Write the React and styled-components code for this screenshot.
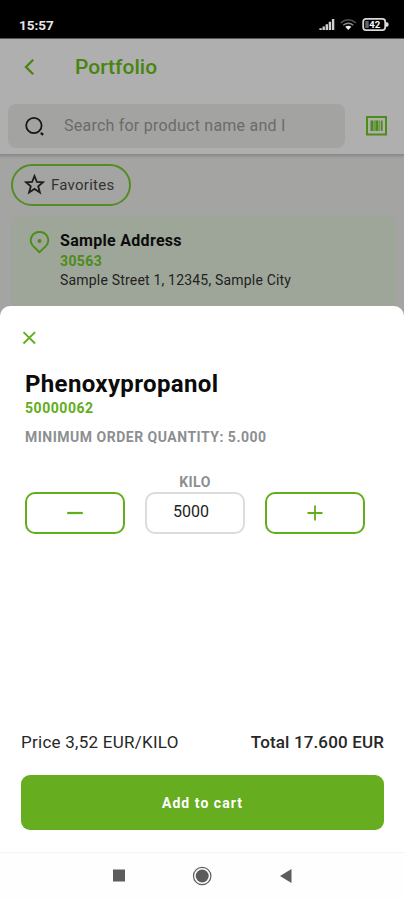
import React, { useState } from 'react';
import styled, { createGlobalStyle } from 'styled-components';

const GlobalStyle = createGlobalStyle`
  :root {
    --green: #62ad1c;
    --green-dim: #488510;
    --text: #272727;
    --gray: #8c8f92;
  }
  * {
    box-sizing: border-box;
  }
  body {
    margin: 0;
    background: #fff;
    font-family: Roboto, sans-serif;
  }
  button, input {
    font-family: inherit;
    margin: 0;
    padding: 0;
  }
  svg {
    display: block;
    flex-shrink: 0;
  }
`;

const Screen = styled.div`
  width: 404px;
  height: 900px;
  display: flex;
  flex-direction: column;
  overflow: hidden;
`;

const StatusBar = styled.div`
  height: 39px;
  flex-shrink: 0;
  display: flex;
  align-items: center;
  justify-content: space-between;
  padding: 11px 15px 0 19px;
  background: #000;
  border-bottom: 1px solid #555;
  color: #e6e6e6;
  font-size: 13.5px;
  font-weight: 700;
  line-height: 16px;
`;

const Page = styled.div`
  height: 279px;
  flex-shrink: 0;
  background: #a4a4a3;
  overflow: hidden;
`;

const Header = styled.header`
  height: 115px;
  background: #afafaf;
  box-shadow: 0 1px 3px 1px #858585;
`;

const TitleRow = styled.div`
  display: flex;
  align-items: center;
  height: 57px;
  padding: 0 0 1px 22px;
  gap: 37px;
`;

const Title = styled.h1`
  margin: 0;
  font-size: 21px;
  font-weight: 500;
  line-height: 26px;
  color: var(--green-dim);
`;

const SearchRow = styled.div`
  display: flex;
  align-items: center;
  padding: 8px 17px 0 8px;
  justify-content: space-between;
`;

const SearchBox = styled.div`
  display: flex;
  align-items: center;
  gap: 19px;
  width: 337px;
  height: 44px;
  padding-left: 16px;
  border-radius: 8px;
  background: #a3a4a1;
  color: #6b6b6b;
  font-size: 16px;
  line-height: 20px;
  letter-spacing: 0.23px;
`;

const Content = styled.div`
  padding: 10px 8px 0 11px;
`;

const Chip = styled.div`
  display: flex;
  align-items: center;
  gap: 6px;
  width: 120px;
  height: 42px;
  padding: 0 0 1px 11px;
  border: 2px solid #538d24;
  border-radius: 21px;
  color: #333;
  font-size: 15px;
  letter-spacing: 0.25px;
`;

const AddressCard = styled.div`
  display: flex;
  gap: 10px;
  height: 110px;
  margin-top: 10px;
  padding: 14px 0 0 18px;
  border-radius: 8px;
  background: #9ea699;
`;

const AddressText = styled.div`
  font-size: 14px;
  line-height: 20px;
  letter-spacing: 0.19px;
  color: #222;
`;

const AddressName = styled.div`
  font-size: 16px;
  font-weight: 700;
  line-height: 22px;
  letter-spacing: 0.3px;
  color: #0c0c0c;
`;

const AddressCode = styled.div`
  font-size: 14px;
  font-weight: 700;
  line-height: 18px;
  letter-spacing: 0.4px;
  color: #4d8b17;
`;

const Sheet = styled.section`
  position: relative;
  flex: 1;
  display: flex;
  flex-direction: column;
  margin-top: -12px;
  padding: 24px 20px 22px 21px;
  border-radius: 10px 10px 0 0;
  background: #fff;
`;

const CloseButton = styled.button`
  width: 16px;
  height: 16px;
  border: none;
  background: none;
`;

const Product = styled.div`
  padding: 23px 4px 0;
`;

const ProductName = styled.h2`
  margin: 0;
  font-size: 24px;
  font-weight: 700;
  line-height: 30px;
  letter-spacing: 0.35px;
  color: #0b0b0b;
`;

const ProductCode = styled.div`
  font-size: 14px;
  font-weight: 700;
  line-height: 18px;
  letter-spacing: 0.55px;
  color: var(--green);
`;

const Label = styled.div`
  font-size: 14px;
  font-weight: 700;
  line-height: 18px;
  letter-spacing: ${({ $wide }) => ($wide ? '0.5px' : '0.4px')};
  color: var(--gray);
`;

const MinimumOrder = styled(Label)`
  margin-top: 11px;
`;

const Stepper = styled.div`
  display: grid;
  grid-template-columns: repeat(3, 100px);
  column-gap: 20px;
  align-items: end;
  margin-top: 27px;
`;

const StepButton = styled.button`
  display: flex;
  align-items: center;
  justify-content: center;
  height: 42px;
  border: 2px solid var(--green);
  border-radius: 10px;
  background: #fff;
`;

const Quantity = styled.label`
  display: flex;
  flex-direction: column;
  align-items: center;
`;

const QuantityInput = styled.input`
  width: 100%;
  height: 42px;
  margin-top: 1px;
  padding: 0 8px 3px 0;
  border: 2px solid #dcdcdc;
  border-radius: 10px;
  outline: none;
  background: #fff;
  color: #222;
  font-size: 16px;
  text-align: center;
`;

const PriceRow = styled.div`
  display: flex;
  justify-content: space-between;
  margin-top: auto;
  font-size: 17px;
  line-height: 22px;
  letter-spacing: 0.26px;
  color: var(--text);
`;

const Total = styled.span`
  font-weight: 500;
  letter-spacing: 0.14px;
`;

const CartButton = styled.button`
  height: 55px;
  margin-top: 22px;
  border: none;
  border-radius: 9px;
  background: #66ad1f;
  color: #fff;
  font-size: 14px;
  font-weight: 700;
  letter-spacing: 1.05px;
`;

const NavBar = styled.nav`
  display: grid;
  grid-template-columns: repeat(3, 84px);
  justify-content: center;
  justify-items: center;
  align-items: center;
  height: 48px;
  flex-shrink: 0;
  padding-bottom: 2px;
  border-top: 1px solid #f4f4f4;
  background: #fefefe;
`;

const StatusIcons = () => (
  <svg width="70" height="16" viewBox="0 0 70 16" fill="none">
    <path
      d="M1.6 13v-1.8M4.7 13v-3.5M7.8 13V7.2M10.9 13V4.8M14.1 13V2"
      stroke="#d0d0d0"
      strokeWidth="2.4"
    />
    <path d="M21.8 5.8q7.5-6 15 0" stroke="#505050" strokeWidth="1.5" />
    <path d="M24.2 8.2q5.1-4 10.2 0" stroke="#8a8a8a" strokeWidth="1.4" />
    <path d="M26.2 9.7q3.1-2 6.2 0l-3.1 3.3z" fill="#eee" />
    <rect x="44.2" y="1.9" width="22" height="11.2" rx="2.8" stroke="#d8d8d8" strokeWidth="1.8" />
    <path d="M67 5.3h1q1.6 0 1.6 2.2T68 9.7h-1z" fill="#ddd" />
    <path d="M46.3 4h3.4v7h-3.4z" fill="#666" />
    <text x="50.2" y="11" fill="#fff" fontSize="9.5" fontWeight="700">
      42
    </text>
  </svg>
);

const BackIcon = () => (
  <svg width="16" height="18" viewBox="0 0 16 18" fill="none">
    <path d="M11.2 1.7L4 9l7.2 7.3" stroke="#488510" strokeWidth="2.3" />
  </svg>
);

const SearchIcon = () => (
  <svg width="21" height="21" viewBox="0 0 21 21" fill="none" stroke="#171717">
    <circle cx="9.9" cy="9.5" r="7.7" strokeWidth="1.8" />
    <path d="M16.8 16.8l2.4 2" strokeWidth="2.2" />
  </svg>
);

const BarcodeIcon = () => (
  <svg width="21" height="20" viewBox="0 0 21 20" fill="none" stroke="#4d8d17">
    <rect x="1" y="1" width="19" height="17.5" strokeWidth="2" />
    <path d="M6 4.5v10.5M10.9 4.5v10.5" strokeWidth="3" />
    <path d="M8.6 4.5v10.5M13.4 4.5v10.5" stroke="#6f9a4c" strokeWidth="1.2" />
    <path d="M15.7 4.5v10.5" strokeWidth="1.9" />
  </svg>
);

const StarIcon = () => (
  <svg width="21" height="21" viewBox="0 0 21 21" fill="none">
    <path
      d="M10.5 2l2.4 6 6.1.3-4.8 4 1.7 6.1-5.4-3.5-5.4 3.5 1.7-6.1L2 8.3l6.1-.3z"
      stroke="#1d1d1d"
      strokeWidth="1.8"
    />
  </svg>
);

const PinIcon = () => (
  <svg width="21" height="24" viewBox="0 0 21 24" fill="none">
    <path
      d="M10.5 22.3L4.2 16.2C-.8 11 2.4 2 10.5 2s11.3 9 6.3 14.2z"
      stroke="#4d8d17"
      strokeWidth="1.9"
    />
    <circle cx="10.5" cy="11" r="2" fill="#4d8d17" />
  </svg>
);

const CloseIcon = () => (
  <svg width="16" height="16" viewBox="0 0 16 16" fill="none">
    <path d="M2.5 2.1l11.6 11.4M14.1 2.1L2.5 13.5" stroke="#62ad1c" strokeWidth="1.9" />
  </svg>
);

const StepIcon = ({ plus }) => (
  <svg width="16" height="16" viewBox="0 0 16 16" fill="none">
    <path
      d={plus ? 'M.5 8h15M8 .5v15' : 'M.2 8h15.6'}
      stroke="#62ad1c"
      strokeWidth={plus ? 1.8 : 2.2}
    />
  </svg>
);

export default function App() {
  const [quantity, setQuantity] = useState(5000);
  const step = 5000;

  return (
    <>
      <GlobalStyle />
      <Screen>
        <StatusBar>
          <span>15:57</span>
          <StatusIcons />
        </StatusBar>
        <Page>
          <Header>
            <TitleRow>
              <BackIcon />
              <Title>Portfolio</Title>
            </TitleRow>
            <SearchRow>
              <SearchBox>
                <SearchIcon />
                <span>Search for product name and I</span>
              </SearchBox>
              <BarcodeIcon />
            </SearchRow>
          </Header>
          <Content>
            <Chip>
              <StarIcon />
              Favorites
            </Chip>
            <AddressCard>
              <PinIcon />
              <AddressText>
                <AddressName>Sample Address</AddressName>
                <AddressCode>30563</AddressCode>
                Sample Street 1, 12345, Sample City
              </AddressText>
            </AddressCard>
          </Content>
        </Page>
        <Sheet>
          <CloseButton aria-label="Close">
            <CloseIcon />
          </CloseButton>
          <Product>
            <ProductName>Phenoxypropanol</ProductName>
            <ProductCode>50000062</ProductCode>
            <MinimumOrder $wide>MINIMUM ORDER QUANTITY: 5.000</MinimumOrder>
            <Stepper>
              <StepButton
                aria-label="Less"
                onClick={() => setQuantity(Math.max(step, quantity - step))}
              >
                <StepIcon />
              </StepButton>
              <Quantity>
                <Label>KILO</Label>
                <QuantityInput
                  value={quantity}
                  onChange={(e) => setQuantity(Number(e.target.value) || 0)}
                />
              </Quantity>
              <StepButton aria-label="More" onClick={() => setQuantity(quantity + step)}>
                <StepIcon plus />
              </StepButton>
            </Stepper>
          </Product>
          <PriceRow>
            <span>Price 3,52 EUR/KILO</span>
            <Total>Total 17.600 EUR</Total>
          </PriceRow>
          <CartButton>Add to cart</CartButton>
        </Sheet>
        <NavBar>
          <svg width="13" height="13" viewBox="0 0 13 13">
            <rect x="1" y=".5" width="12" height="12" fill="#5c5c5c" />
          </svg>
          <svg width="20" height="20" viewBox="0 0 20 20">
            <circle cx="10.2" cy="10" r="8.7" fill="none" stroke="#5c5c5c" strokeWidth="1.2" />
            <circle cx="10.2" cy="10" r="6.5" fill="#5c5c5c" />
          </svg>
          <svg width="12" height="14" viewBox="0 0 12 14">
            <path d="M11.5 0v14L0 7z" fill="#5c5c5c" />
          </svg>
        </NavBar>
      </Screen>
    </>
  );
}
